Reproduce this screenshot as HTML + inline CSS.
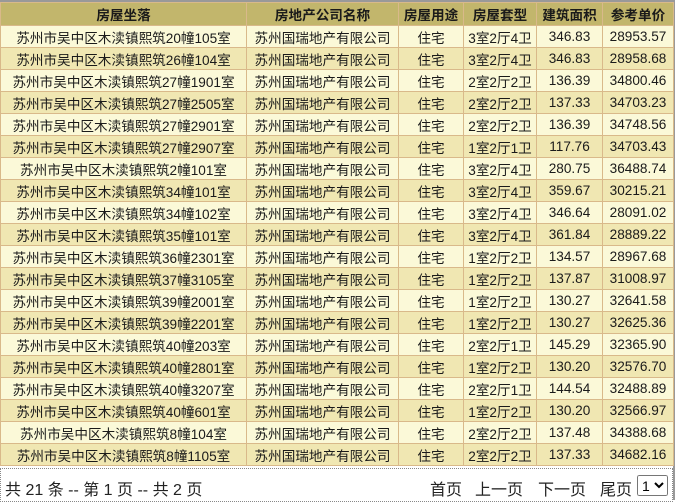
<!DOCTYPE html><html><head><meta charset="utf-8"><style>
body{margin:0;width:677px;height:500px;overflow:hidden;background:#fff;font-family:"Liberation Sans","Noto Sans CJK SC",sans-serif;}
.wrap{position:absolute;left:0;top:0;width:673px;height:498px;border:1px solid #999;border-width:2px 2px 0 0;}
table{border-collapse:collapse;width:673px;table-layout:fixed;font-size:13.6px;color:#1a1a1a;}
td,th{border:1px solid #d9b98a;text-align:center;padding:0;height:21px;white-space:nowrap;overflow:hidden;}
th{background:#c2b66c;height:22px;font-weight:bold;font-size:13.6px;}
tr:nth-child(even) td{background:#fbf9d8}
tr:nth-child(odd) td{background:#f0e7b2}
.f{position:absolute;left:0;top:466px;width:671px;height:32px;border:1px dotted #888;font-size:16px;color:#222;}
.f span{position:absolute;top:7px;white-space:nowrap}
select{position:absolute;left:636px;top:6px;font-size:14px;height:21px;width:31px;padding:0}
</style></head><body><div class="wrap">
<table>
<colgroup><col style="width:246px"><col style="width:152px"><col style="width:65px"><col style="width:73px"><col style="width:66px"><col style="width:71px"></colgroup>
<tr><th>房屋坐落</th><th>房地产公司名称</th><th>房屋用途</th><th>房屋套型</th><th>建筑面积</th><th>参考单价</th></tr>
<tr><td>苏州市吴中区木渎镇熙筑20幢105室</td><td>苏州国瑞地产有限公司</td><td>住宅</td><td>3室2厅4卫</td><td>346.83</td><td>28953.57</td></tr>
<tr><td>苏州市吴中区木渎镇熙筑26幢104室</td><td>苏州国瑞地产有限公司</td><td>住宅</td><td>3室2厅4卫</td><td>346.83</td><td>28958.68</td></tr>
<tr><td>苏州市吴中区木渎镇熙筑27幢1901室</td><td>苏州国瑞地产有限公司</td><td>住宅</td><td>2室2厅2卫</td><td>136.39</td><td>34800.46</td></tr>
<tr><td>苏州市吴中区木渎镇熙筑27幢2505室</td><td>苏州国瑞地产有限公司</td><td>住宅</td><td>2室2厅2卫</td><td>137.33</td><td>34703.23</td></tr>
<tr><td>苏州市吴中区木渎镇熙筑27幢2901室</td><td>苏州国瑞地产有限公司</td><td>住宅</td><td>2室2厅2卫</td><td>136.39</td><td>34748.56</td></tr>
<tr><td>苏州市吴中区木渎镇熙筑27幢2907室</td><td>苏州国瑞地产有限公司</td><td>住宅</td><td>1室2厅1卫</td><td>117.76</td><td>34703.43</td></tr>
<tr><td>苏州市吴中区木渎镇熙筑2幢101室</td><td>苏州国瑞地产有限公司</td><td>住宅</td><td>3室2厅4卫</td><td>280.75</td><td>36488.74</td></tr>
<tr><td>苏州市吴中区木渎镇熙筑34幢101室</td><td>苏州国瑞地产有限公司</td><td>住宅</td><td>3室2厅4卫</td><td>359.67</td><td>30215.21</td></tr>
<tr><td>苏州市吴中区木渎镇熙筑34幢102室</td><td>苏州国瑞地产有限公司</td><td>住宅</td><td>3室2厅4卫</td><td>346.64</td><td>28091.02</td></tr>
<tr><td>苏州市吴中区木渎镇熙筑35幢101室</td><td>苏州国瑞地产有限公司</td><td>住宅</td><td>3室2厅4卫</td><td>361.84</td><td>28889.22</td></tr>
<tr><td>苏州市吴中区木渎镇熙筑36幢2301室</td><td>苏州国瑞地产有限公司</td><td>住宅</td><td>1室2厅2卫</td><td>134.57</td><td>28967.68</td></tr>
<tr><td>苏州市吴中区木渎镇熙筑37幢3105室</td><td>苏州国瑞地产有限公司</td><td>住宅</td><td>1室2厅2卫</td><td>137.87</td><td>31008.97</td></tr>
<tr><td>苏州市吴中区木渎镇熙筑39幢2001室</td><td>苏州国瑞地产有限公司</td><td>住宅</td><td>1室2厅2卫</td><td>130.27</td><td>32641.58</td></tr>
<tr><td>苏州市吴中区木渎镇熙筑39幢2201室</td><td>苏州国瑞地产有限公司</td><td>住宅</td><td>1室2厅2卫</td><td>130.27</td><td>32625.36</td></tr>
<tr><td>苏州市吴中区木渎镇熙筑40幢203室</td><td>苏州国瑞地产有限公司</td><td>住宅</td><td>2室2厅1卫</td><td>145.29</td><td>32365.90</td></tr>
<tr><td>苏州市吴中区木渎镇熙筑40幢2801室</td><td>苏州国瑞地产有限公司</td><td>住宅</td><td>1室2厅2卫</td><td>130.20</td><td>32576.70</td></tr>
<tr><td>苏州市吴中区木渎镇熙筑40幢3207室</td><td>苏州国瑞地产有限公司</td><td>住宅</td><td>2室2厅1卫</td><td>144.54</td><td>32488.89</td></tr>
<tr><td>苏州市吴中区木渎镇熙筑40幢601室</td><td>苏州国瑞地产有限公司</td><td>住宅</td><td>1室2厅2卫</td><td>130.20</td><td>32566.97</td></tr>
<tr><td>苏州市吴中区木渎镇熙筑8幢104室</td><td>苏州国瑞地产有限公司</td><td>住宅</td><td>2室2厅2卫</td><td>137.48</td><td>34388.68</td></tr>
<tr><td>苏州市吴中区木渎镇熙筑8幢1105室</td><td>苏州国瑞地产有限公司</td><td>住宅</td><td>2室2厅2卫</td><td>137.33</td><td>34682.16</td></tr>
</table>
<div class="f"><span style="left:4px">共 21 条 -- 第 1 页 -- 共 2 页</span><span style="left:429px">首页</span><span style="left:474px">上一页</span><span style="left:537px">下一页</span><span style="left:599px">尾页</span><select><option>1</option></select></div>
</div></body></html>
